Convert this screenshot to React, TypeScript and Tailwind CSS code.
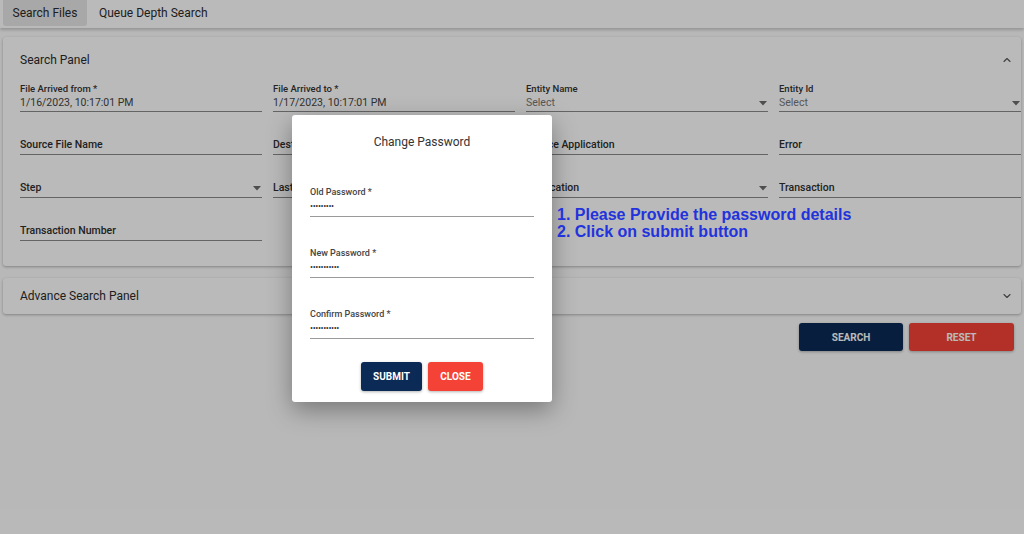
import { ChevronUp, ChevronDown } from 'lucide-react';

type Field = { label: string; value?: string; small?: boolean; select?: boolean };

const fields: Field[] = [
  { label: 'File Arrived from *', value: '1/16/2023, 10:17:01 PM', small: true },
  { label: 'File Arrived to *', value: '1/17/2023, 10:17:01 PM', small: true },
  { label: 'Entity Name', value: 'Select', small: true, select: true },
  { label: 'Entity Id', value: 'Select', small: true, select: true },
  { label: 'Source File Name' },
  { label: 'Destination File Name' },
  { label: 'Source Application' },
  { label: 'Error' },
  { label: 'Step', select: true },
  { label: 'Last Updated By' },
  { label: 'Application', select: true },
  { label: 'Transaction' },
  { label: 'Transaction Number' },
];

const Caret = () => (
  <svg width="8" height="5" viewBox="0 0 8 5" className="mb-[4px] mr-[1px] shrink-0">
    <path d="M0 0 L8 0 L4 4.5 Z" fill="#6b6b6b" />
  </svg>
);

const SearchField = ({ field }: { field: Field }) => {
  if (field.small) {
    return (
      <div className="flex h-[32px] flex-col justify-end border-b border-[#8a8a8a] pb-[1px]">
        <span className="text-[9.5px] font-medium leading-[12px] text-[#333]">{field.label}</span>
        <div className="flex items-end justify-between">
          <span className={`text-[10.5px] leading-[15px] ${field.select ? 'text-[#777]' : 'text-[#444]'}`}>
            {field.value}
          </span>
          {field.select && <Caret />}
        </div>
      </div>
    );
  }
  return (
    <div className="flex h-[32px] items-end justify-between border-b border-[#8a8a8a] pb-[2px]">
      <span className="text-[10.5px] font-medium leading-[15px] text-[#2e2e2e]">{field.label}</span>
      {field.select && <Caret />}
    </div>
  );
};

const PasswordField = ({ label, dots }: { label: string; dots: string }) => (
  <div className="flex flex-col border-b border-[#9a9a9a] pb-[4px]">
    <span className="text-[9px] font-medium leading-[12px] text-[#444]">{label}</span>
    <span className="mt-[2px] text-[9px] leading-[12px] tracking-[-0.4px] text-[#333]">{dots}</span>
  </div>
);

export default function App() {
  return (
    <div className="relative h-[534px] w-[1024px] overflow-hidden bg-[#fdfdfd] font-['Roboto',sans-serif]">
      {/* Tabs */}
      <div className="flex h-[28px] items-start bg-white pl-[3px] shadow-[0_2px_3px_rgba(0,0,0,0.2)]">
        <div className="flex h-[26px] w-[84px] items-center justify-center rounded-b-[3px] bg-[#e6e6e6] text-[12px] text-[#2b2b2b]">
          Search Files
        </div>
        <div className="flex h-[26px] items-center px-[12px] text-[12px] text-[#2b2b2b]">
          Queue Depth Search
        </div>
      </div>

      <div className="px-[3px]">
        {/* Search Panel */}
        <div className="mt-[9px] rounded-[3px] bg-white pb-[25px] shadow-[0_1px_3px_rgba(0,0,0,0.3)]">
          <div className="flex h-[43px] items-center justify-between pl-[17px] pr-[8px] pt-[2px]">
            <span className="text-[12px] text-[#2b2b2b]">Search Panel</span>
            <ChevronUp size={12} strokeWidth={2.2} className="text-[#555]" />
          </div>
          <div className="grid grid-cols-4 gap-x-[11px] gap-y-[11px] pl-[17px]">
            {fields.map((f) => (
              <SearchField key={f.label} field={f} />
            ))}
          </div>
        </div>

        {/* Advance Search Panel */}
        <div className="mt-[12px] flex h-[36px] items-center justify-between rounded-[3px] bg-white pl-[17px] pr-[8px] shadow-[0_1px_3px_rgba(0,0,0,0.3)]">
          <span className="text-[12px] text-[#2b2b2b]">Advance Search Panel</span>
          <ChevronDown size={12} strokeWidth={2.2} className="text-[#555]" />
        </div>

        <div className="mt-[9px] flex justify-end gap-[6px] pr-[7px]">
          <button className="h-[28px] w-[104px] rounded-[3px] bg-[#0b2a55] text-[10px] font-bold text-white shadow-[0_1px_3px_rgba(0,0,0,0.3)]">
            SEARCH
          </button>
          <button className="h-[28px] w-[105px] rounded-[3px] bg-[#f44336] text-[10px] font-bold text-white shadow-[0_1px_3px_rgba(0,0,0,0.3)]">
            RESET
          </button>
        </div>
      </div>

      {/* Modal overlay */}
      <div className="absolute inset-0 bg-black/[0.27]">
        <div className="absolute left-[292px] top-[115px] w-[260px] rounded-[3px] bg-white px-[18px] pb-[11px] pt-[18px] shadow-[0_8px_24px_rgba(0,0,0,0.35)]">
          <div className="text-center text-[12px] leading-[18px] text-[#333]">Change Password</div>
          <div className="mt-[35px]">
            <PasswordField label="Old Password *" dots="•••••••••" />
          </div>
          <div className="mt-[30px]">
            <PasswordField label="New Password *" dots="•••••••••••" />
          </div>
          <div className="mt-[30px]">
            <PasswordField label="Confirm Password *" dots="•••••••••••" />
          </div>
          <div className="mt-[23px] flex justify-center gap-[6px]">
            <button className="h-[29px] w-[61px] rounded-[3px] bg-[#0b2a55] text-[10px] font-bold text-white shadow-[0_1px_3px_rgba(0,0,0,0.3)]">
              SUBMIT
            </button>
            <button className="h-[29px] w-[55px] rounded-[3px] bg-[#f44336] text-[10px] font-bold text-white shadow-[0_1px_3px_rgba(0,0,0,0.3)]">
              CLOSE
            </button>
          </div>
        </div>

        <div className="absolute left-[557px] top-[206px] font-['Liberation_Sans',Arial,sans-serif] text-[16px] font-bold leading-[17px] text-[#2233dd]">
          <div>1. Please Provide the password details</div>
          <div>2. Click on submit button</div>
        </div>
      </div>
    </div>
  );
}
